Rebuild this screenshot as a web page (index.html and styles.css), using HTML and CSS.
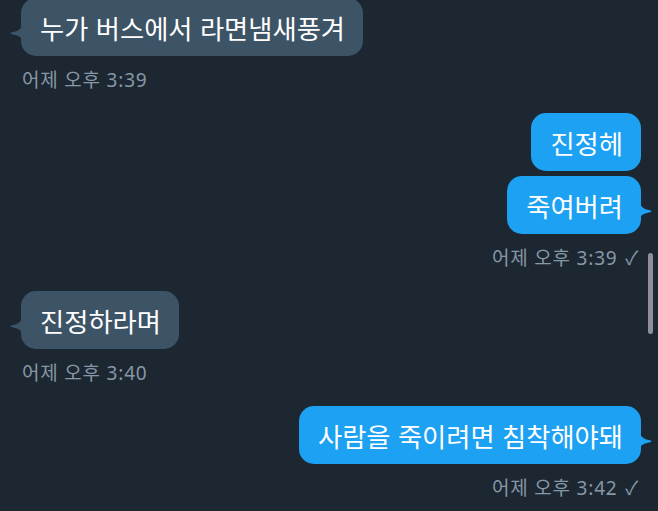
FILE: index.html
```html
<!DOCTYPE html>
<html lang="ko">
<head>
<meta charset="utf-8">
<link rel="stylesheet" href="styles.css">
</head>
<body>
<div class="chat">
  <div class="row in">
    <div class="bubble recv">누가 버스에서 라면냄새풍겨
      <svg class="tail tail-l" viewBox="0 0 14 22"><path d="M14 0 C14 7 9 10.5 3 11.3 C1 11.6 1 12.9 3 13.3 C8 14.3 14 16 14 22 Z"/></svg>
    </div>
  </div>
  <div class="ts in">어제 오후 3:39</div>

  <div class="row out">
    <div class="bubble sent">진정헤</div>
  </div>
  <div class="row out second">
    <div class="bubble sent">죽여버려
      <svg class="tail tail-r" viewBox="0 0 14 22"><path d="M0 0 C0 7 5 10.5 11 11.3 C13 11.6 13 12.9 11 13.3 C6 14.3 0 16 0 22 Z"/></svg>
    </div>
  </div>
  <div class="ts out">어제 오후 3:39 <span class="check">✓</span></div>

  <div class="row in">
    <div class="bubble recv">진정하라며
      <svg class="tail tail-l" viewBox="0 0 14 22"><path d="M14 0 C14 7 9 10.5 3 11.3 C1 11.6 1 12.9 3 13.3 C8 14.3 14 16 14 22 Z"/></svg>
    </div>
  </div>
  <div class="ts in">어제 오후 3:40</div>

  <div class="row out">
    <div class="bubble sent">사람을 죽이려면 침착해야돼
      <svg class="tail tail-r" viewBox="0 0 14 22"><path d="M0 0 C0 7 5 10.5 11 11.3 C13 11.6 13 12.9 11 13.3 C6 14.3 0 16 0 22 Z"/></svg>
    </div>
  </div>
  <div class="ts out">어제 오후 3:42 <span class="check">✓</span></div>
</div>
<div class="scrollbar"></div>
</body>
</html>
```
FILE: styles.css
```css
html, body {
  margin: 0;
  padding: 0;
  background: #1c2732;
  width: 658px;
  height: 511px;
  overflow: hidden;
}
body {
  position: relative;
  font-family: "Noto Sans CJK KR", "Noto Sans", sans-serif;
}
.chat {
  display: flex;
  flex-direction: column;
  padding: 0 17px 0 21px;
  margin-top: -2px;
}
.row {
  display: flex;
}
.row.in { justify-content: flex-start; }
.row.out { justify-content: flex-end; }
.row.second { margin-top: 5px; }
.bubble {
  position: relative;
  height: 58px;
  box-sizing: border-box;
  padding: 0 18px 0 19px;
  border-radius: 15px;
  display: flex;
  align-items: center;
  font-size: 26.3px;
  color: #ffffff;
}
.recv { background: #3d5366; }
.sent { background: #1da1f2; }
.tail {
  position: absolute;
  width: 14px;
  height: 22px;
  top: 23px;
}
.tail-l { left: -12px; fill: #3d5366; }
.tail-r { right: -12px; fill: #1da1f2; }
.ts {
  font-family: "Noto Sans", "Noto Sans CJK KR", sans-serif;
  font-size: 19px;
  line-height: 20px;
  letter-spacing: 0.8px;
  color: #8797a5;
  margin-top: 14px;
  margin-bottom: 23px;
}
.ts.in { align-self: flex-start; padding-left: 1px; }
.ts.out { align-self: flex-end; padding-right: 2px; }
.check { margin-left: 2px; }
.scrollbar {
  position: absolute;
  left: 648px;
  top: 253px;
  width: 5px;
  height: 81px;
  border-radius: 3px;
  background: #8e8f98;
}
```
